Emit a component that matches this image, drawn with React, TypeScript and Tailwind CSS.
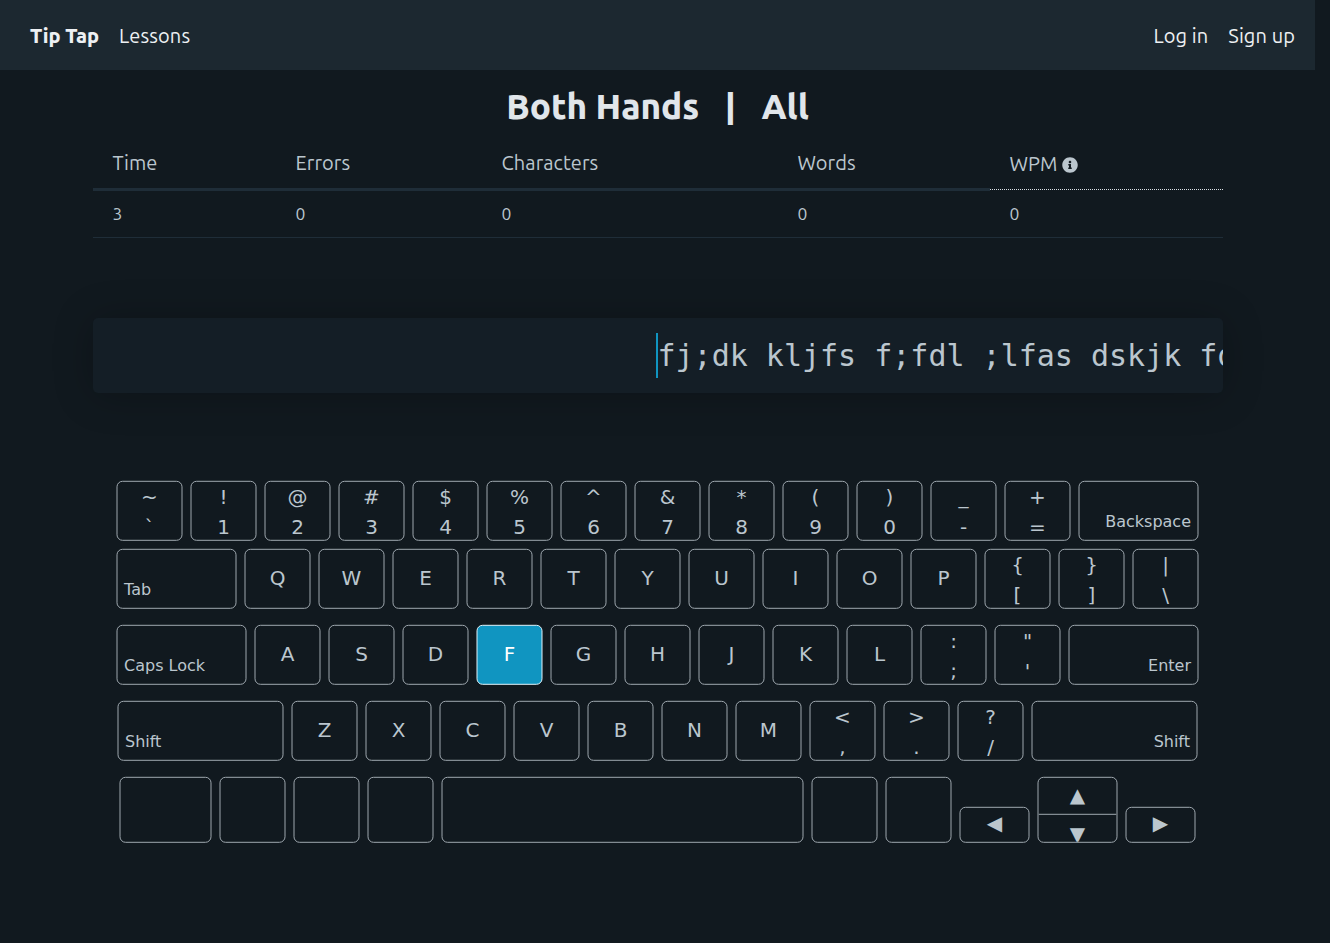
import React from "react";
import { FaInfoCircle } from "react-icons/fa";

const KEY =
  "box-border h-[60px] shrink-0 rounded-[6px] border border-[#9fa8af] text-[20px] leading-[30px] text-[#bbc6ce]";

function Key({ label, active = false }: { label: string; active?: boolean }) {
  return (
    <div
      className={
        active
          ? "flex h-[60px] w-[66px] shrink-0 items-center justify-center rounded-[6px] border border-[#e1f3fa] bg-[#1095c1] pb-[2px] text-[20px] leading-[30px] text-white"
          : `${KEY} flex w-[66px] items-center justify-center pb-[2px]`
      }
    >
      {label}
    </div>
  );
}

function DualKey({ top, bottom }: { top: string; bottom: string }) {
  return (
    <div className={`${KEY} flex w-[66px] flex-col items-center`}>
      <span>{top}</span>
      <span>{bottom}</span>
    </div>
  );
}

function WideKey({ label, width, right = false }: { label: string; width: string; right?: boolean }) {
  return (
    <div className={`${KEY} ${width} flex items-end px-[6.5px] pb-[6px] ${right ? "justify-end" : "justify-start"}`}>
      <span className="text-[16px] leading-6">{label}</span>
    </div>
  );
}

function BlankKey({ width }: { width: string }) {
  return <div className={`h-[66px] shrink-0 rounded-[6px] border border-[#9fa8af] ${width}`} />;
}

const numberKeys = ["~`", "!1", "@2", "#3", "$4", "%5", "^6", "&7", "*8", "(9", ")0", "_-", "+="];

function Keyboard() {
  return (
    <div className="ml-[0.5px] mt-[88px] flex w-[1130px] -translate-x-[0.5px] -translate-y-[0.2px] flex-col items-center font-['DejaVu_Sans',sans-serif]">
      <div className="flex w-[1082px] gap-2">
        {numberKeys.map((k) => (
          <DualKey key={k} top={k[0]} bottom={k[1]} />
        ))}
        <WideKey label="Backspace" width="w-[120px]" right />
      </div>
      <div className="mt-2 flex w-[1082px] gap-2">
        <WideKey label="Tab" width="w-[120px]" />
        {"QWERTYUIOP".split("").map((k) => (
          <Key key={k} label={k} />
        ))}
        <DualKey top="{" bottom="[" />
        <DualKey top="}" bottom="]" />
        <DualKey top="|" bottom={"\\"} />
      </div>
      <div className="mt-4 flex w-[1082px] gap-2">
        <WideKey label="Caps Lock" width="w-[130px]" />
        {"ASDFGHJKL".split("").map((k) => (
          <Key key={k} label={k} active={k === "F"} />
        ))}
        <DualKey top=":" bottom=";" />
        <DualKey top={'"'} bottom="'" />
        <WideKey label="Enter" width="w-[130px]" right />
      </div>
      <div className="mt-4 flex w-[1080px] gap-2">
        <WideKey label="Shift" width="w-[166px]" />
        {"ZXCVBNM".split("").map((k) => (
          <Key key={k} label={k} />
        ))}
        <DualKey top="<" bottom="," />
        <DualKey top=">" bottom="." />
        <DualKey top="?" bottom="/" />
        <WideKey label="Shift" width="w-[166px]" right />
      </div>
      <div className="mt-4 flex w-[1076px] items-end gap-2 text-[20px] text-[#bbc6ce]">
        <BlankKey width="w-[92px]" />
        <BlankKey width="w-[66px]" />
        <BlankKey width="w-[66px]" />
        <BlankKey width="w-[66px]" />
        <BlankKey width="w-[362px]" />
        <BlankKey width="w-[66px]" />
        <BlankKey width="w-[66px]" />
        <div className="flex h-9 w-[70px] shrink-0 justify-center rounded-[6px] border border-[#9fa8af] leading-[30px]">◀</div>
        <div className="flex h-[66px] w-20 shrink-0 flex-col overflow-hidden rounded-[6px] border border-[#9fa8af] text-center">
          <div className="h-[37px] border-b border-[#9fa8af] leading-[34px]">▲</div>
          <div className="h-[27px] leading-[38px]">▼</div>
        </div>
        <div className="flex h-9 w-[70px] shrink-0 justify-center rounded-[6px] border border-[#9fa8af] leading-[30px]">▶</div>
      </div>
    </div>
  );
}

const columns = [
  { name: "Time", value: "3", width: "w-[183px]" },
  { name: "Errors", value: "0", width: "w-[206px]" },
  { name: "Characters", value: "0", width: "w-[296px]" },
  { name: "Words", value: "0", width: "w-[212px]" },
];

function Stats() {
  return (
    <div className="w-[1130px] font-[430] text-[#bbc6ce]">
      <div className="flex h-[51px] tracking-[0.06px]">
        {columns.map((c) => (
          <div key={c.name} className={`${c.width} border-b-[3px] border-[#1f2d38] pl-5 pt-[8px] text-[20px] leading-[30px]`}>
            {c.name}
          </div>
        ))}
        <div className="flex h-[50px] w-[233px] gap-1 border-b border-dotted border-[#d8dee3] pl-5 pt-[9px] text-[20px] leading-[30px]">
          <span>WPM</span>
          <FaInfoCircle className="ml-[0.5px] mt-[8px] size-[16px]" />
        </div>
      </div>
      <div className="flex h-[47px] border-b border-[#1f2d38] text-[17.5px] leading-[46px]">
        {columns.map((c) => (
          <div key={c.name} className={`${c.width} pl-5`}>
            {c.value}
          </div>
        ))}
        <div className="pl-5">0</div>
      </div>
    </div>
  );
}

export default function App() {
  return (
    <div className="h-[943px] overflow-hidden bg-[#11191f] font-['Ubuntu','Noto_Sans',sans-serif] [text-rendering:optimizeLegibility]">
      <div className="w-[1315px]">
        <nav className="flex h-[70px] items-center justify-between bg-[#1c2830] pl-[30px] pr-5 pt-[2px] text-[20px] font-[430] leading-[30px] tracking-[0.1px] text-[#edf0f3]">
          <div className="flex gap-5">
            <strong className="font-extrabold tracking-[-0.05px]">Tip Tap</strong>
            <span>Lessons</span>
          </div>
          <div className="flex gap-5">
            <span>Log in</span>
            <span>Sign up</span>
          </div>
        </nav>
        <main className="mx-auto w-[1130px]">
          <h1 className="flex h-[70px] items-center justify-center gap-[25.5px] pt-[2px] text-[35px] font-extrabold tracking-[-0.03px] text-[#e1e6eb]">
            <span>Both Hands</span>
            <span>|</span>
            <span>All</span>
          </h1>
          <Stats />
          <section className="mt-20 flex h-[75px] items-center overflow-hidden rounded-[5px] bg-[#141e26] pl-[563px] shadow-[0_2px_40px_rgba(0,0,0,0.24)]">
            <div className="h-[45px] whitespace-pre border-l-2 border-[#1095c1] font-['DejaVu_Sans_Mono',monospace] text-[30px] leading-[45px] text-[#bbc6ce]">
              fj;dk kljfs f;fdl ;lfas dskjk fd
            </div>
          </section>
          <Keyboard />
        </main>
      </div>
    </div>
  );
}
